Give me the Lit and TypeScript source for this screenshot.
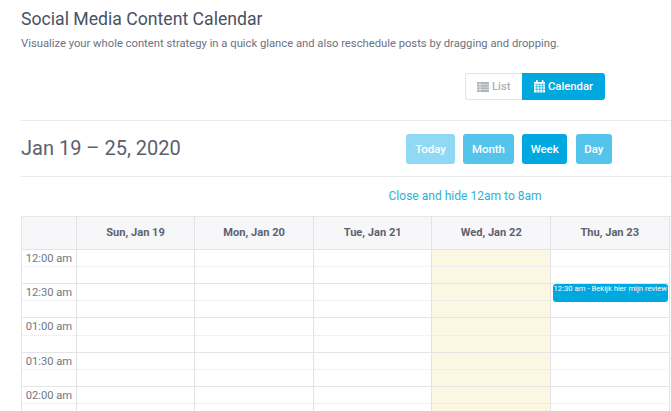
import { LitElement, html, css, svg } from "lit";
import { customElement } from "lit/decorators.js";

const days = ["Sun, Jan 19", "Mon, Jan 20", "Tue, Jan 21", "Wed, Jan 22", "Thu, Jan 23"];
const times = ["12:00 am", "12:30 am", "01:00 am", "01:30 am", "02:00 am"];

const listIcon = svg`<svg class="ico" viewBox="0 0 13 11" width="12" height="10"><path fill="currentColor" d="M0 0h13v2.4H0zM0 3h13v2.2H0zM0 5.8h13V8H0zM0 8.6h13V11H0z"/><path stroke="#fff" stroke-width=".6" d="M3.2 0v11"/></svg>`;
const calIcon = svg`<svg class="ico" viewBox="0 0 12 13" width="11.5" height="12.5"><path fill="currentColor" d="M2.2 0h1.6v2H8.2V0h1.6v2H12v11H0V2h2.2z"/><path stroke="#00a8e0" stroke-width=".7" fill="none" d="M.4 4.3h11.2M.4 7h11.2M.4 9.6h11.2M3 4.3V13M6 4.3V13M9 4.3V13"/></svg>`;

@customElement("app-root")
export class AppRoot extends LitElement {
  static styles = css`
    :host {
      display: block;
      width: 671px;
      height: 411px;
      overflow: hidden;
      background: #fff;
      font-family: Roboto, "Liberation Sans", sans-serif;
      color: #4d5463;
    }
    .page { padding: 9px 0 0 21px; box-sizing: border-box; width: 671px; }
    h1 { margin: 0; font-size: 17.65px; line-height: 21px; font-weight: 400; color: #4a5263; }
    .sub { margin: 7px 0 0; font-size: 11.24px; line-height: 14px; color: #6b7280; white-space: nowrap; }
    .toggle-row { display: flex; justify-content: flex-end; padding: 22px 66px 0 0; }
    .toggle { display: flex; height: 27px; font-size: 11.3px; font-weight: 500; }
    .toggle > div { display: flex; align-items: center; gap: 2.5px; box-sizing: border-box; }
    .list { width: 57px; justify-content: center; color: #aeb1b6; border: 1px solid #e2e4e7; border-right: 0; border-radius: 3px 0 0 3px; }
    .cal { width: 83px; justify-content: center; color: #fff; background: #00a8e0; border-radius: 0 3px 3px 0; }
    .ico { display: block; flex: none; }
    .bar {
      display: flex; align-items: center; height: 55px; margin-top: 20px;
      border-top: 1px solid #e8e9eb; border-bottom: 1px solid #e8e9eb; box-sizing: content-box;
    }
    .range { font-size: 20px; font-weight: 400; color: #5a606d; width: 385px; padding-bottom: 2px; box-sizing: border-box; }
    .btns { display: flex; gap: 8.2px; }
    .btn { height: 30px; display: flex; align-items: center; justify-content: center; border-radius: 3px; color: #fff; font-size: 11.4px; font-weight: 500; }
    .today { width: 49px; background: #8fd9f4; }
    .month { width: 50.5px; background: #55c4ec; }
    .week { width: 45.5px; background: #00a8e0; }
    .day { width: 36.5px; background: #55c4ec; }
    .hide { margin: 11px 0 0 367.5px; font-size: 12.05px; line-height: 16px; color: #2eb1d8; white-space: nowrap; }
    .grid {
      position: relative;
      display: grid;
      grid-template-columns: 54.8px repeat(5, 118.55px);
      grid-template-rows: 32.6px repeat(10, 17.2px);
      width: 650px;
      margin-top: 12px;
      border-top: 1px solid #e6e7ea;
      border-left: 1px solid #e6e7ea;
    }
    .head {
      display: flex; align-items: center; justify-content: center;
      background: #f7f7f9; font-size: 11.1px; font-weight: 700; color: #5d6270;
      border-right: 1px solid #e2e3e6; border-bottom: 1px solid #e2e3e6; box-sizing: border-box;
    }
    .time {
      font-size: 11.2px; color: #72767f; text-align: center; line-height: 17px;
      border-right: 1px solid #e2e3e6; box-sizing: border-box;
    }
    .cell { border-right: 1px solid #e2e3e6; box-sizing: border-box; min-width: 0; }
    .solid { border-bottom: 1px solid #e4e5e8; }
    .dot { border-bottom: 1px dotted #e4e5e8; }
    .now { background: #fcf7e3; }
    .ev {
      position: absolute; left: 530.5px; top: 66.5px; width: 115px; height: 18px;
      background: #00a8e0; border-radius: 3px; color: #fff; font-size: 7.7px; line-height: 10px;
      padding-left: 1px; box-sizing: border-box; overflow: hidden; white-space: nowrap;
    }
  `;

  render() {
    const rows = [];
    for (let r = 0; r < 10; r++) {
      const line = r % 2 === 0 ? "dot" : "solid";
      rows.push(html`<div class="time ${line}">${r % 2 === 0 ? times[r / 2] : ""}</div>`);
      days.forEach((_, d) => rows.push(html`<div class="cell ${line} ${d === 3 ? "now" : ""}"></div>`));
    }
    return html`<div class="page">
      <h1>Social Media Content Calendar</h1>
      <p class="sub">Visualize your whole content strategy in a quick glance and also reschedule posts by dragging and dropping.</p>
      <div class="toggle-row"><div class="toggle">
        <div class="list">${listIcon}<span>List</span></div>
        <div class="cal">${calIcon}<span>Calendar</span></div>
      </div></div>
      <div class="bar">
        <div class="range">Jan 19 – 25, 2020</div>
        <div class="btns">
          <div class="btn today">Today</div><div class="btn month">Month</div>
          <div class="btn week">Week</div><div class="btn day">Day</div>
        </div>
      </div>
      <div class="hide">Close and hide 12am to 8am</div>
      <div class="grid">
        <div class="head"></div>
        ${days.map((d) => html`<div class="head">${d}</div>`)}
        ${rows}
        <div class="ev">12:30 am - Bekijk hier mijn review</div>
      </div>
    </div>`;
  }
}
